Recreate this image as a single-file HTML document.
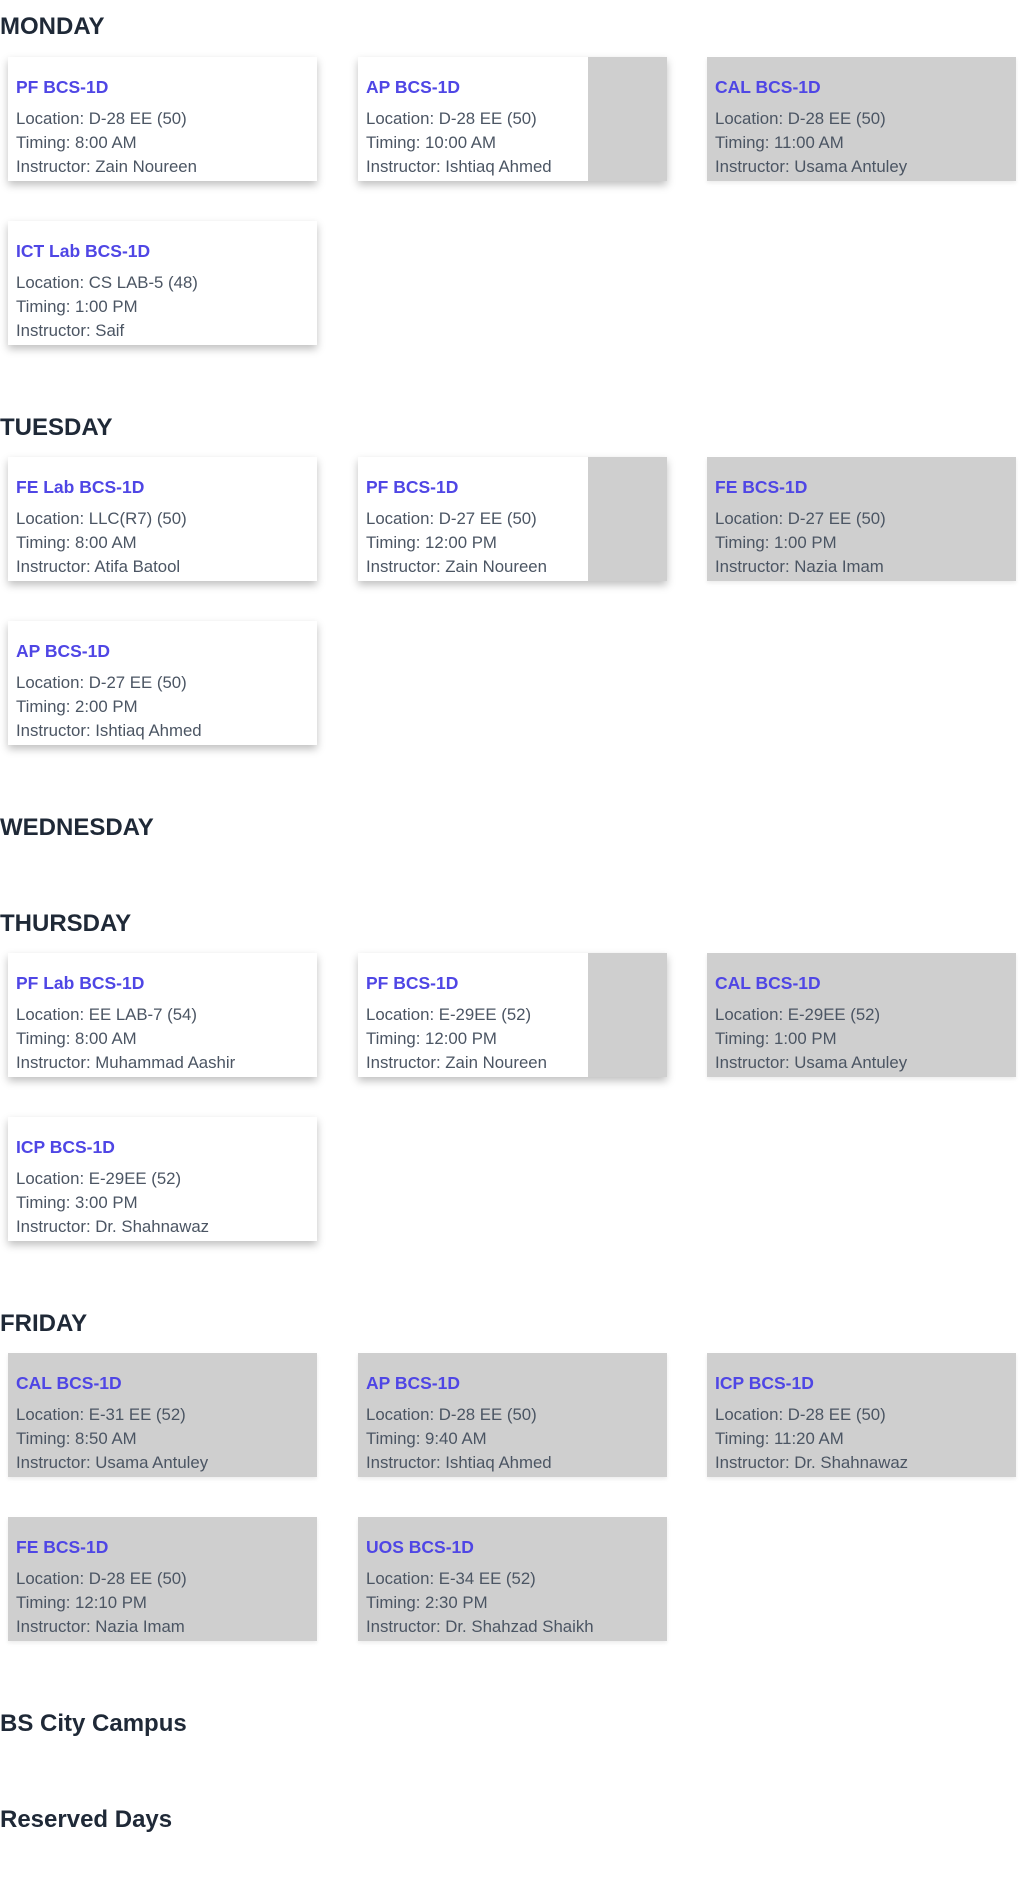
<!DOCTYPE html>
<html><head><style>
body{margin:0;width:1024px;height:1888px;background:#fff;font-family:"Liberation Sans",sans-serif;position:relative;overflow:hidden}
h2{position:absolute;left:0;margin:0;font-size:24px;font-weight:700;color:#1f2937;line-height:30px;transform:translateY(-15px)}
.c{position:absolute;width:309px;height:124px;background:#fff;box-shadow:0 4px 8px rgba(0,0,0,.25)}
.c.p{background:linear-gradient(to right,#fff 0,#fff 230px,#cfcfcf 230px)}
.c.g{background:#cfcfcf;box-shadow:0 2px 4px rgba(0,0,0,.08)}
.c b{position:absolute;left:8px;top:19px;font-size:17.5px;color:#4f46e5;font-weight:700;line-height:22px;white-space:nowrap}
.c span{position:absolute;left:8px;font-size:16.8px;color:#4b5563;line-height:20px;white-space:nowrap}
.l1{top:52px}.l2{top:76px}.l3{top:100px}
</style></head><body>
<h2 style="top:27px">MONDAY</h2>
<div class="c" style="left:8px;top:57px"><b>PF BCS-1D</b><span class="l1">Location: D-28 EE (50)</span><span class="l2">Timing: 8:00 AM</span><span class="l3">Instructor: Zain Noureen</span></div>
<div class="c p" style="left:358px;top:57px"><b>AP BCS-1D</b><span class="l1">Location: D-28 EE (50)</span><span class="l2">Timing: 10:00 AM</span><span class="l3">Instructor: Ishtiaq Ahmed</span></div>
<div class="c g" style="left:707px;top:57px"><b>CAL BCS-1D</b><span class="l1">Location: D-28 EE (50)</span><span class="l2">Timing: 11:00 AM</span><span class="l3">Instructor: Usama Antuley</span></div>
<div class="c" style="left:8px;top:221px"><b>ICT Lab BCS-1D</b><span class="l1">Location: CS LAB-5 (48)</span><span class="l2">Timing: 1:00 PM</span><span class="l3">Instructor: Saif</span></div>

<h2 style="top:428px">TUESDAY</h2>
<div class="c" style="left:8px;top:457px"><b>FE Lab BCS-1D</b><span class="l1">Location: LLC(R7) (50)</span><span class="l2">Timing: 8:00 AM</span><span class="l3">Instructor: Atifa Batool</span></div>
<div class="c p" style="left:358px;top:457px"><b>PF BCS-1D</b><span class="l1">Location: D-27 EE (50)</span><span class="l2">Timing: 12:00 PM</span><span class="l3">Instructor: Zain Noureen</span></div>
<div class="c g" style="left:707px;top:457px"><b>FE BCS-1D</b><span class="l1">Location: D-27 EE (50)</span><span class="l2">Timing: 1:00 PM</span><span class="l3">Instructor: Nazia Imam</span></div>
<div class="c" style="left:8px;top:621px"><b>AP BCS-1D</b><span class="l1">Location: D-27 EE (50)</span><span class="l2">Timing: 2:00 PM</span><span class="l3">Instructor: Ishtiaq Ahmed</span></div>

<h2 style="top:828px">WEDNESDAY</h2>

<h2 style="top:924px">THURSDAY</h2>
<div class="c" style="left:8px;top:953px"><b>PF Lab BCS-1D</b><span class="l1">Location: EE LAB-7 (54)</span><span class="l2">Timing: 8:00 AM</span><span class="l3">Instructor: Muhammad Aashir</span></div>
<div class="c p" style="left:358px;top:953px"><b>PF BCS-1D</b><span class="l1">Location: E-29EE (52)</span><span class="l2">Timing: 12:00 PM</span><span class="l3">Instructor: Zain Noureen</span></div>
<div class="c g" style="left:707px;top:953px"><b>CAL BCS-1D</b><span class="l1">Location: E-29EE (52)</span><span class="l2">Timing: 1:00 PM</span><span class="l3">Instructor: Usama Antuley</span></div>
<div class="c" style="left:8px;top:1117px"><b>ICP BCS-1D</b><span class="l1">Location: E-29EE (52)</span><span class="l2">Timing: 3:00 PM</span><span class="l3">Instructor: Dr. Shahnawaz</span></div>

<h2 style="top:1324px">FRIDAY</h2>
<div class="c g" style="left:8px;top:1353px"><b>CAL BCS-1D</b><span class="l1">Location: E-31 EE (52)</span><span class="l2">Timing: 8:50 AM</span><span class="l3">Instructor: Usama Antuley</span></div>
<div class="c g" style="left:358px;top:1353px"><b>AP BCS-1D</b><span class="l1">Location: D-28 EE (50)</span><span class="l2">Timing: 9:40 AM</span><span class="l3">Instructor: Ishtiaq Ahmed</span></div>
<div class="c g" style="left:707px;top:1353px"><b>ICP BCS-1D</b><span class="l1">Location: D-28 EE (50)</span><span class="l2">Timing: 11:20 AM</span><span class="l3">Instructor: Dr. Shahnawaz</span></div>
<div class="c g" style="left:8px;top:1517px"><b>FE BCS-1D</b><span class="l1">Location: D-28 EE (50)</span><span class="l2">Timing: 12:10 PM</span><span class="l3">Instructor: Nazia Imam</span></div>
<div class="c g" style="left:358px;top:1517px"><b>UOS BCS-1D</b><span class="l1">Location: E-34 EE (52)</span><span class="l2">Timing: 2:30 PM</span><span class="l3">Instructor: Dr. Shahzad Shaikh</span></div>

<h2 style="top:1724px">BS City Campus</h2>
<h2 style="top:1820px">Reserved Days</h2>
</body></html>
